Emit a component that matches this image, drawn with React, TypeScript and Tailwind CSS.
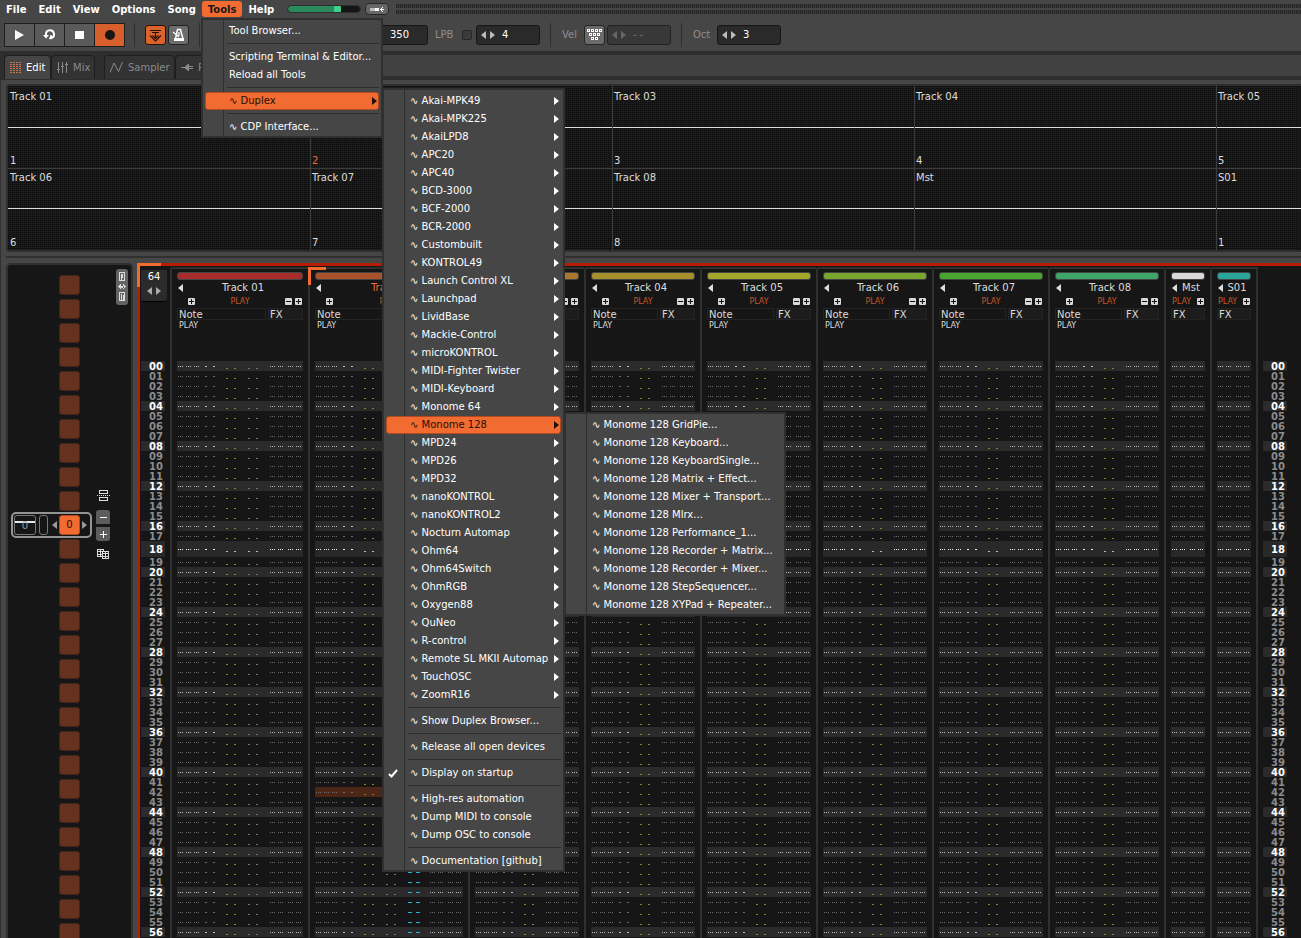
import React from 'react';
import { clsx } from 'clsx';

/* ---------- shared drawings ---------- */

function TriRight({ className }: { className?: string }) {
  return (
    <svg width="5" height="8" viewBox="0 0 5 8" className={className} fill="currentColor" aria-hidden="true">
      <path d="M0 0L5 4L0 8z" />
    </svg>
  );
}

function TriLeft({ className }: { className?: string }) {
  return (
    <svg width="5" height="8" viewBox="0 0 5 8" className={className} fill="currentColor" aria-hidden="true">
      <path d="M5 0L0 4L5 8z" />
    </svg>
  );
}

function Separator() {
  return <div className="h-6 w-px bg-[#2e2e2e]" />;
}

/* ---------- menus ---------- */

type Entry = { label: string; sub?: boolean; active?: boolean; checked?: boolean; tool?: boolean } | null;

const TOOLS: Entry[] = [
  { label: 'Tool Browser...' },
  null,
  { label: 'Scripting Terminal & Editor...' },
  { label: 'Reload all Tools' },
  null,
  { label: 'Duplex', tool: true, sub: true, active: true },
  null,
  { label: 'CDP Interface...', tool: true },
];

const DEVICES = [
  'Akai-MPK49', 'Akai-MPK225', 'AkaiLPD8', 'APC20', 'APC40', 'BCD-3000', 'BCF-2000', 'BCR-2000',
  'Custombuilt', 'KONTROL49', 'Launch Control XL', 'Launchpad', 'LividBase', 'Mackie-Control',
  'microKONTROL', 'MIDI-Fighter Twister', 'MIDI-Keyboard', 'Monome 64', 'Monome 128', 'MPD24',
  'MPD26', 'MPD32', 'nanoKONTROL', 'nanoKONTROL2', 'Nocturn Automap', 'Ohm64', 'Ohm64Switch',
  'OhmRGB', 'Oxygen88', 'QuNeo', 'R-control', 'Remote SL MKII Automap', 'TouchOSC', 'ZoomR16',
];

const DUPLEX: Entry[] = [
  ...DEVICES.map((label) => ({ label, tool: true, sub: true, active: label === 'Monome 128' })),
  null,
  { label: 'Show Duplex Browser...', tool: true },
  null,
  { label: 'Release all open devices', tool: true },
  null,
  { label: 'Display on startup', tool: true, checked: true },
  null,
  { label: 'High-res automation', tool: true },
  { label: 'Dump MIDI to console', tool: true },
  { label: 'Dump OSC to console', tool: true },
  null,
  { label: 'Documentation [github]', tool: true },
];

const MONOME: Entry[] = [
  'GridPie', 'Keyboard', 'KeyboardSingle', 'Matrix + Effect', 'Mixer + Transport', 'Mlrx',
  'Performance_1', 'Recorder + Matrix', 'Recorder + Mixer', 'StepSequencer', 'XYPad + Repeater',
].map((n) => ({ label: `Monome 128 ${n}...`, tool: true }));

function Menu({ items, className }: { items: Entry[]; className: string }) {
  return (
    <div
      role="menu"
      className={clsx(
        'absolute z-10 border-2 border-[#303030] bg-[linear-gradient(to_right,transparent_20px,#2e2e2e_20px,#2e2e2e_21px,transparent_21px)] bg-[#464646] pt-[2px] text-white',
        className,
      )}
    >
      {items.map((item, i) =>
        item === null ? (
          <div key={i} role="separator" className="h-2 pt-[3px] pr-[2px] pl-6">
            <div className="h-px bg-[#2e2e2e]" />
          </div>
        ) : (
          <div key={i} className="px-[2px]">
            <button
              type="button"
              role="menuitem"
              className={clsx(
                'flex h-[18px] w-full items-center rounded-[3px] border pr-[1px] text-left whitespace-nowrap',
                item.active ? 'border-[#b04a20] bg-[#f26b30] text-[#241008]' : 'border-transparent',
              )}
            >
              <span className="flex w-[23px] shrink-0 items-center pl-[1px]">
                {item.checked && (
                  <svg width="10" height="9" viewBox="0 0 10 9" fill="none" stroke="white" strokeWidth="2" aria-hidden="true">
                    <path d="M1 5L3.5 7.5L9 1" />
                  </svg>
                )}
              </span>
              <span className="flex-1">
                {item.tool && <span>∿ </span>}
                {item.label}
              </span>
              {item.sub && <TriRight />}
            </button>
          </div>
        ),
      )}
    </div>
  );
}

/* ---------- top bars ---------- */

function MenuBar() {
  return (
    <header className="flex h-[18px] items-center font-bold text-white">
      <nav className="flex items-center">
        {['File', 'Edit', 'View', 'Options', 'Song', 'Tools', 'Help'].map((m) => (
          <button
            key={m}
            type="button"
            className={clsx(
              'h-4 rounded-[3px] px-[6px] leading-[18px]',
              m === 'Tools' && 'bg-[#f26b30] text-[#1a1a1a]',
            )}
          >
            {m}
          </button>
        ))}
      </nav>
      <input
        type="range"
        aria-label="Master volume"
        min={0}
        max={100}
        defaultValue={70}
        className="ml-2 h-[6px] w-[72px] appearance-none rounded-[3px] bg-[linear-gradient(to_right,#2a8a5c_68%,#151515_68%)] outline outline-[#2e2e2e] [&::-webkit-slider-thumb]:h-2 [&::-webkit-slider-thumb]:w-[7px] [&::-webkit-slider-thumb]:appearance-none [&::-webkit-slider-thumb]:rounded-[2px] [&::-webkit-slider-thumb]:bg-[#3fd08a]"
      />
      <button
        type="button"
        aria-label="Audio device"
        className="ml-[5px] flex h-3 w-6 items-center justify-center rounded-[4px] border border-[#262626] bg-[#666]"
      >
        <svg width="16" height="7" viewBox="0 0 16 7" shapeRendering="crispEdges" aria-hidden="true">
          <path d="M1 2h6v3h-6z" fill="#bbb" />
          <path d="M6 2h4v3h-4zM11 3h4v1h-4zM12 2h1v3h-1zM13 1h1v1h-1zM13 5h1v1h-1z" fill="#fff" />
        </svg>
      </button>
      <div className="ml-[7px] flex flex-1 flex-col gap-[2px]">
        <div className="h-1 bg-[repeating-linear-gradient(to_right,#262626_0_1px,#3a3a3a_1px_2px)]" />
        <div className="h-1 bg-[repeating-linear-gradient(to_right,#262626_0_1px,#3a3a3a_1px_2px)]" />
      </div>
    </header>
  );
}

function Spin({ label, value, dim }: { label: string; value: string; dim?: boolean }) {
  return (
    <div
      className={clsx(
        'flex h-5 w-16 items-center gap-[4px] rounded-[3px] border pl-[4px]',
        dim ? 'border-[#222] bg-[#383838] text-[#777]' : 'border-[#151515] bg-[#2a2a2a] text-white',
      )}
    >
      <button type="button" aria-label={`${label} down`} className={dim ? 'text-[#666]' : 'text-[#bbb]'}>
        <TriLeft />
      </button>
      <button type="button" aria-label={`${label} up`} className={dim ? 'text-[#666]' : 'text-[#bbb]'}>
        <TriRight />
      </button>
      <input aria-label={label} defaultValue={value} className="ml-[3px] w-8 min-w-0 bg-transparent" />
    </div>
  );
}

const VELOCITY_KEYS = [[0, 0], [4, 0], [8, 0], [12, 0], [2, 4], [6, 4], [10, 4], [4, 8], [8, 8]];

function Toolbar() {
  return (
    <div className="flex h-[33px] items-center pl-1 text-[#8e8e8e]">
      <div className="flex h-6 gap-px border border-[#1e1e1e] bg-[#1e1e1e]">
        <button type="button" aria-label="Play" className="flex w-[29px] items-center justify-center bg-[#5a5a5a]">
          <svg width="9" height="10" viewBox="0 0 9 10" fill="#fff" aria-hidden="true"><path d="M0 0L9 5L0 10z" /></svg>
        </button>
        <button type="button" aria-label="Loop pattern" className="flex w-[29px] items-center justify-center bg-[#5a5a5a]">
          <svg width="13" height="11" viewBox="0 0 13 11" fill="none" stroke="#fff" strokeWidth="2" aria-hidden="true">
            <path d="M3 7V5.2A4 4 0 1 1 8 9.2H6.2M8 9.8V6.2" />
            <path d="M0 6H6L3 9.5z" fill="#fff" stroke="none" />
          </svg>
        </button>
        <button type="button" aria-label="Stop" className="flex w-[29px] items-center justify-center bg-[#5a5a5a]">
          <span className="h-2 w-[9px] bg-white" />
        </button>
        <button type="button" aria-label="Record" className="flex w-[29px] items-center justify-center bg-[#d65f2c]">
          <span className="size-[10px] rounded-full bg-[#171717]" />
        </button>
      </div>
      <div className="ml-[9px]"><Separator /></div>
      <button type="button" aria-label="Follow player" className="ml-[10px] flex h-5 w-[21px] items-center justify-center rounded-[3px] border border-[#2a1208] bg-[#dc622c]">
        <svg width="13" height="14" viewBox="0 0 13 14" fill="none" stroke="#26120a" aria-hidden="true">
          <path d="M1 2.500h11M3 4.500h7" />
          <path d="M6.500 5v6M3.500 7.500L6.500 10.500L9.500 7.500M1 7.500L6.500 13L12 7.500" strokeWidth="1.200" />
        </svg>
      </button>
      <button type="button" aria-label="Metronome" className="ml-[2px] flex h-5 w-[21px] items-center justify-center rounded-[3px] border border-[#222] bg-[#6c6c6c]">
        <svg width="13" height="14" viewBox="0 0 13 14" fill="none" stroke="#fff" aria-hidden="true">
          <path d="M5.500 1.500h3L11 11H3.500z" strokeWidth="1.500" />
          <path d="M1 4l6 5M7 4v4" strokeWidth="1.200" />
          <path d="M2 10h10v3H2z" fill="#fff" stroke="none" />
        </svg>
      </button>
      <div className="ml-[10px]"><Separator /></div>
      <input aria-label="Tempo" defaultValue="350" className="ml-[164px] h-5 w-16 rounded-[3px] border border-[#151515] bg-[#2a2a2a] pl-[25px] text-white" />
      <label htmlFor="lpb" className="ml-[7px] w-[27px]">LPB</label>
      <input id="lpb" type="checkbox" className="size-[10px] appearance-none rounded-[2px] border border-[#262626] bg-[#3a3a3a]" />
      <div className="ml-1"><Spin label="Lines per beat" value="4" /></div>
      <div className="ml-[10px]"><Separator /></div>
      <span className="ml-[11px] w-[22px]">Vel</span>
      <button type="button" aria-label="Keyboard velocity" className="flex h-5 w-[21px] items-center justify-center rounded-[3px] border border-[#242424] bg-[#6a6a6a]">
        <svg width="15" height="11" viewBox="0 0 15 11" fill="none" stroke="#fff" shapeRendering="crispEdges" aria-hidden="true">
          {VELOCITY_KEYS.map(([x, y]) => <rect key={`${x}-${y}`} x={x + 0.5} y={y + 0.5} width="2" height="2" />)}
        </svg>
      </button>
      <div className="ml-[2px]"><Spin label="Velocity" value="- -" dim /></div>
      <div className="ml-[10px]"><Separator /></div>
      <span className="ml-[11px] w-6">Oct</span>
      <Spin label="Octave" value="3" />
    </div>
  );
}

function Tab({ label, active, className, children }: { label: string; active?: boolean; className: string; children: React.ReactNode }) {
  return (
    <button
      type="button"
      className={clsx(
        'flex h-6 items-center rounded-t-[4px] border border-b-0 border-[#1f1f1f] pl-[5px]',
        active ? 'bg-[#454545] text-white' : 'bg-[#333] text-[#8a8a8a]',
        className,
      )}
    >
      {children}
      <span className="ml-[5px]">{label}</span>
    </button>
  );
}

function TabBar() {
  return (
    <div className="flex h-[29px] items-start bg-[#2e2e2e] pt-1 pl-1">
      <Tab label="Edit" active className="w-[47px]">
        <svg width="11" height="12" viewBox="0 0 11 12" shapeRendering="crispEdges" aria-hidden="true">
          <path d="M0 .5h11M0 2.500h11M0 4.500h11M0 6.500h11M0 8.500h11M0 10.500h11" stroke="#d0714c" strokeDasharray="2 1" />
        </svg>
      </Tab>
      <Tab label="Mix" className="w-11">
        <svg width="11" height="11" viewBox="0 0 11 11" stroke="#8a8a8a" shapeRendering="crispEdges" aria-hidden="true">
          <path d="M1.500 0v11M5.500 0v11M9.500 0v11M0 7.500h3M4 4.500h3M8 2.500h3" />
        </svg>
      </Tab>
      <Tab label="Sampler" className="ml-[9px] w-[71px]">
        <svg width="13" height="11" viewBox="0 0 13 11" fill="none" stroke="#8a8a8a" aria-hidden="true">
          <path d="M0 10.500L4 1L8.500 9.500L12.500 0" />
        </svg>
      </Tab>
      <Tab label="Plugins" className="w-[90px]">
        <svg width="12" height="9" viewBox="0 0 12 9" fill="#8a8a8a" aria-hidden="true">
          <path d="M0 4h4v1H0zM3 4.500L7 1V8zM7 1h1v2h4v1H8v1h4v1H8v2H7z" />
        </svg>
      </Tab>
      <div className="h-[21px] flex-1 bg-[#414141]" />
    </div>
  );
}

/* ---------- track scopes ---------- */

const SCOPES = [
  { name: 'Track 01', num: '1' }, { name: 'Track 02', num: '2', current: true }, { name: 'Track 03', num: '3' },
  { name: 'Track 04', num: '4' }, { name: 'Track 05', num: '5' }, { name: 'Track 06', num: '6' },
  { name: 'Track 07', num: '7' }, { name: 'Track 08', num: '8' }, { name: 'Mst', num: '' }, { name: 'S01', num: '1' },
];

function Scopes() {
  return (
    <section className="ml-[6px] rounded-l-[4px] border-2 border-r-0 border-[#2e2e2e]">
      <div className="grid grid-cols-[repeat(4,302px)_1fr] bg-[linear-gradient(to_right,#131313_1px,transparent_1px),linear-gradient(#131313_1px,#232323_1px)] bg-[length:2px_2px] text-[#ddd]">
        {SCOPES.map((s, i) => (
          <div
            key={s.name}
            className={clsx(
              'flex flex-col',
              i % 5 === 0 ? 'pl-[2px]' : 'border-l border-[#3c3c3c] pl-[1px]',
              i < 5 ? 'h-[83px] border-b border-b-[#3c3c3c] pt-[2px]' : 'h-[81px]',
            )}
          >
            <span className="h-[18px] leading-[18px]">{s.name}</span>
            <div className={clsx('mt-[21px] h-px bg-[#ddd]', i % 5 === 0 ? '-ml-[2px]' : '-ml-[1px]')} />
            <span className={clsx('mt-auto h-[14px] leading-[14px]', s.current && 'text-[#f26b30]')}>{s.num}</span>
          </div>
        ))}
      </div>
    </section>
  );
}

/* ---------- pattern sequencer ---------- */

function Sequencer() {
  return (
    <aside className="ml-[6px] flex w-[127px] shrink-0 items-start rounded-t-[5px] border-2 border-b-0 border-[#303030] bg-[#161616]">
      <div className="flex w-[84px] flex-col pt-2 pl-[3px]">
        {Array.from({ length: 28 }, (_, k) =>
          k === 10 ? (
            <div key={k} className="-my-px flex h-[26px] items-center rounded-[5px] border-2 border-[#949494] bg-[#161616]">
              <button type="button" className="ml-[1px] flex h-5 w-[22px] flex-col items-center rounded-[3px] border border-[#777] pt-[5px] leading-[8px] text-[#999]">
                <span className="-mb-[1px] h-[2px] w-full bg-[#e8e8e8]" />
                <span>0</span>
              </button>
              <span className="ml-[3px] h-5 w-[9px] rounded-[3px] border border-[#777]" />
              <button type="button" aria-label="Previous pattern" className="ml-[4px] text-[#999]"><TriLeft /></button>
              <button type="button" className="ml-[2px] flex h-5 w-[21px] items-center justify-center rounded-[3px] border border-[#b04a20] bg-[#f26b30] text-[#241008]">0</button>
              <button type="button" aria-label="Next pattern" className="ml-[2px] text-[#999]"><TriRight /></button>
            </div>
          ) : (
            <div key={k} className="flex h-6 items-center pl-12">
              <button type="button" aria-label={`Pattern slot ${k}`} className="h-5 w-[21px] rounded-[3px] border border-[#44241a] bg-[#663220]" />
            </div>
          ),
        )}
      </div>
      <div className="ml-[4px] flex w-[14px] flex-col items-center pt-[225px]">
        <svg width="13" height="11" viewBox="0 0 13 11" fill="none" stroke="#ddd" shapeRendering="crispEdges" aria-hidden="true">
          <path d="M2.500 .5h8v3h-8zM2.500 7.500h8v3h-8z" />
          <path d="M0 5.500h13" strokeDasharray="1 1" />
        </svg>
        <button type="button" aria-label="Remove pattern" className="mt-[9px] flex h-[14px] w-[14px] items-center justify-center rounded-t-[3px] bg-[#5c5c5c]">
          <span className="h-px w-[7px] bg-white" />
        </button>
        <button type="button" aria-label="Add pattern" className="mt-[3px] flex h-[14px] w-[14px] items-center justify-center rounded-b-[3px] bg-[#5c5c5c]">
          <svg width="7" height="7" viewBox="0 0 7 7" stroke="#fff" shapeRendering="crispEdges" aria-hidden="true"><path d="M0 3.500h7M3.500 0v7" /></svg>
        </button>
        <svg className="mt-[8px]" width="13" height="10" viewBox="0 0 13 10" fill="none" stroke="#ddd" shapeRendering="crispEdges" aria-hidden="true">
          <path d="M5 7.500H.5V.5h6v2M.5 2.500h4M.5 5.500h4M3.500 .5v7" />
          <path d="M5.500 2.500h6v7h-6zM5.500 4.500h6M5.500 7.500h6M8.500 2.500v7" />
        </svg>
      </div>
      <div className="mt-1 ml-[6px] flex h-9 w-3 items-center justify-center rounded-[3px] bg-[#646464]">
        <svg width="8" height="30" viewBox="0 0 8 30" fill="none" stroke="#ddd" shapeRendering="crispEdges" aria-hidden="true">
          <path d="M1.500 .5h5v8h-5zM3.500 8V2.500h1v3h-1M1.500 20.500h5v8h-5zM3.500 28v-6M5 23v5" />
          <path d="M0 14.500L3 11V18zM8 14.500L5 11V18zM2 13.500h4v2H2z" fill="#ddd" stroke="none" />
        </svg>
      </div>
    </aside>
  );
}

/* ---------- pattern editor ---------- */

type Kind = 'vol' | 'pan' | 'delay';
type Track = { name: string; bar: string; cols?: Kind[]; current?: boolean };

const TRACKS: Track[] = [
  { name: 'Track 01', bar: 'bg-[#a92c2c]', cols: ['vol', 'pan'] },
  { name: 'Track 02', bar: 'bg-[#a9522b]', cols: ['vol', 'pan', 'delay'], current: true },
  { name: 'Track 03', bar: 'bg-[#a9772b]', cols: ['vol'] },
  { name: 'Track 04', bar: 'bg-[#a6902b]', cols: ['vol'] },
  { name: 'Track 05', bar: 'bg-[#a2a62b]', cols: ['vol'] },
  { name: 'Track 06', bar: 'bg-[#78a62e]', cols: ['vol'] },
  { name: 'Track 07', bar: 'bg-[#48a62e]', cols: ['vol'] },
  { name: 'Track 08', bar: 'bg-[#3fa66a]', cols: ['vol'] },
  { name: 'Mst', bar: 'bg-[#d9d9d9]' },
  { name: 'S01', bar: 'bg-[#2aa59a]' },
];

const ROWS = Array.from({ length: 57 }, (_, i) => i);
const PLAYHEAD = 18;
const CURSOR = 42;

const px = (x: number, y: number, w: number) => `M${x} ${y}h${w}v1h-${w}z`;
const triple = (x: number, y: number) => px(x, y, 1) + px(x + 2, y, 1) + px(x + 4, y, 1);

const INK: Record<Kind, string> = { vol: '#8a8420', pan: '#5c8550', delay: '#2fb0dc' };

function Cell({ row, cols }: { row: number; cols?: Kind[] }) {
  const y = row === PLAYHEAD ? 8 : 5;
  const sub = cols ?? [];
  const fx = cols ? 49 + sub.length * 22 : 1;
  const width = fx + 33;
  let base = '';
  if (cols) base += triple(1, y) + triple(9, y) + triple(17, y) + px(28, y, 2) + px(36, y, 2);
  base += triple(fx, y) + triple(fx + 8, y) + triple(fx + 18, y) + triple(fx + 26, y);
  const ink = row === PLAYHEAD ? '#eee' : row % 4 === 0 ? '#bbb' : '#6c6c6c';
  return (
    <svg width={width} height={row === PLAYHEAD ? 16 : 10} className="block" shapeRendering="crispEdges" aria-hidden="true">
      <path d={base} fill={ink} />
      {sub.map((kind, i) => (
        <path
          key={kind}
          d={kind === 'delay' ? px(93, y, 4) + px(101, y, 4) : px(49 + i * 22, y + 2, 2) + px(57 + i * 22, y + 2, 2)}
          fill={row === PLAYHEAD ? '#bbb' : INK[kind]}
        />
      ))}
    </svg>
  );
}

function rowClass(row: number) {
  return clsx(row === PLAYHEAD ? 'h-4 bg-[#292929]' : 'h-[10px]', row % 4 === 0 && 'bg-[#2b2b2b]');
}

function LineNumbers() {
  return (
    <div className="w-6 text-[10px] font-bold">
      {ROWS.map((r) => (
        <div
          key={r}
          className={clsx(
            rowClass(r),
            'pr-[2px] text-right',
            r === PLAYHEAD ? 'leading-[18px]' : 'leading-[12px]',
            r === PLAYHEAD || r % 4 === 0 ? 'text-white' : 'text-[#8c8c8c]',
          )}
        >
          {String(r).padStart(2, '0')}
        </div>
      ))}
    </div>
  );
}

function TinyButton({ minus, label }: { minus?: boolean; label: string }) {
  return (
    <button type="button" aria-label={label} className="flex size-[7px] items-center justify-center rounded-[1px] bg-[#d8d8d8]">
      <svg width="5" height="5" viewBox="0 0 5 5" stroke="#111" shapeRendering="crispEdges" aria-hidden="true">
        <path d={minus ? 'M0 2.500h5' : 'M0 2.500h5M2.500 0v5'} />
      </svg>
    </button>
  );
}

function TrackColumn({ track }: { track: Track }) {
  const wide = !!track.cols;
  return (
    <div className="relative shrink-0 rounded-tl-[3px] border-t-2 border-l-2 border-[#303030] px-[5px] pt-[3px]">
      {track.current && (
        <div className="absolute -top-[2px] -left-[2px] size-[18px] border-t-[3px] border-l-[3px] border-[#f26b30]" />
      )}
      <div className={clsx('h-2 rounded-[3px] border border-[#444]', track.bar)} />
      <div className="flex h-4 items-center pl-[1px] text-[#ddd]">
        <TriLeft />
        <span className={clsx('flex-1 text-center leading-[16px]', track.current && 'text-[#f26b30]')}>{track.name}</span>
      </div>
      <div className={clsx('flex h-[11px] items-center justify-between pr-[1px] text-[8px] leading-[8px] text-[#c4562a]', wide ? 'pl-[11px]' : 'pl-[1px]')}>
        {wide && <TinyButton label="Add note column" />}
        <span>PLAY</span>
        <span className="flex gap-[3px]">
          {wide && <TinyButton minus label="Remove effect column" />}
          <TinyButton label="Add effect column" />
        </span>
      </div>
      <div className="mt-px flex h-3 gap-[2px] leading-[12px] text-[#ddd]">
        {wide && <div className="flex-1 border border-[#232323] pl-[1px]">Note</div>}
        <div className={clsx('border border-[#232323] bg-[#1c1c1c] pl-[1px]', wide ? 'w-[35px]' : 'w-full')}>FX</div>
      </div>
      <div className="h-[41px] pt-[1px] pl-[2px] text-[8px] leading-[9px] text-[#ddd]">{wide && 'PLAY'}</div>
      {ROWS.map((r) => (
        <div key={r} className={clsx(rowClass(r), track.current && r === CURSOR && 'bg-[#4c2617]')}>
          <Cell row={r} cols={track.cols} />
        </div>
      ))}
    </div>
  );
}

function PatternEditor() {
  return (
    <main className="relative ml-1 flex min-w-0 flex-1 border-t-[3px] border-l-[3px] border-[#b71c05] bg-[#161616]">
      <div className="absolute -top-[3px] -left-[3px] size-6 border-t-[3px] border-l-[3px] border-[#f26b30]" />
      <div className="flex w-[30px] shrink-0 flex-col pl-[1px]">
        <div className="relative mt-1 h-8 w-[26px] shrink-0 rounded-b-[3px] border-b border-black bg-[#2b2b2b] text-center text-white">
          <div className="h-[14px] leading-[14px]">64</div>
          <div className="mt-[3px] flex justify-center gap-[4px] text-[#aaa]">
            <button type="button" aria-label="Fewer lines"><TriLeft /></button>
            <button type="button" aria-label="More lines"><TriRight /></button>
          </div>
        </div>
        <div className="mt-[59px]"><LineNumbers /></div>
      </div>
      <div className="mt-px flex border-r-2 border-[#303030]">
        {TRACKS.map((t) => <TrackColumn key={t.name} track={t} />)}
      </div>
      <div className="mt-[95px] ml-[5px]"><LineNumbers /></div>
    </main>
  );
}

export default function App() {
  return (
    <div className="relative flex h-screen flex-col overflow-hidden bg-[#464646] font-['DejaVu_Sans',sans-serif] text-[10px] leading-[12px]">
      <MenuBar />
      <Toolbar />
      <TabBar />
      <div className="flex min-h-0 flex-1 flex-col border-l border-[#303030] pt-1">
        <div className="-ml-px"><Scopes /></div>
        <div className="mt-[4px] ml-[5px] h-[2px] shrink-0 bg-[#303030]" />
        <div className="mt-[5px] -ml-px flex min-h-0 flex-1 overflow-hidden">
          <Sequencer />
          <PatternEditor />
        </div>
      </div>
      <Menu items={TOOLS} className="top-[18px] left-[201px] w-[182px]" />
      <Menu items={DUPLEX} className="top-[88px] left-[382px] w-[183px]" />
      <Menu items={MONOME} className="top-[412px] left-[564px] w-[222px]" />
    </div>
  );
}
